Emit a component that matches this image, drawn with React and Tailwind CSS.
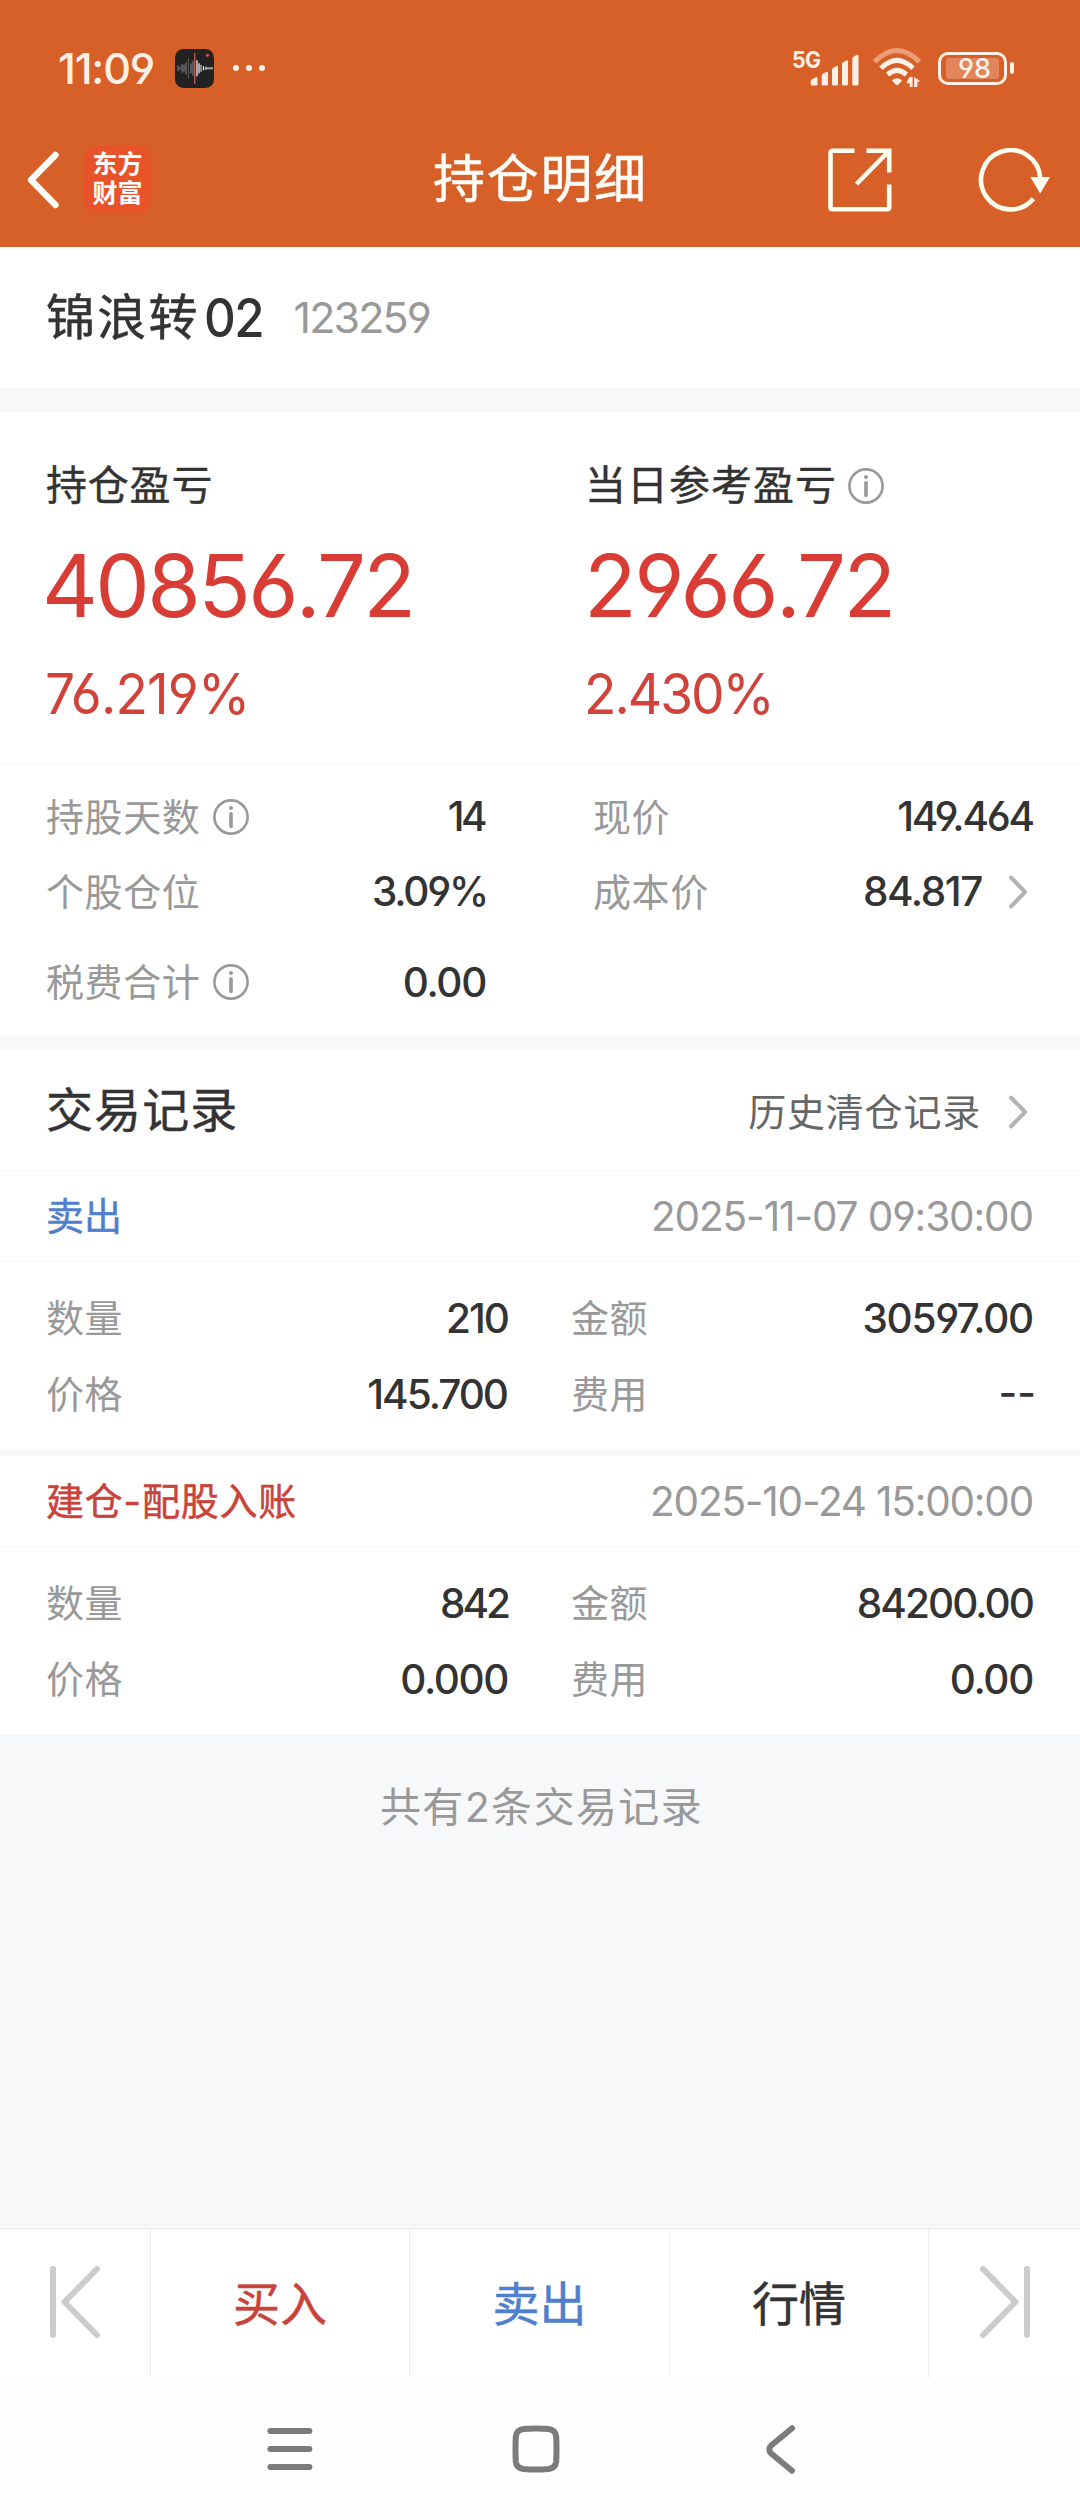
import React from "react";

const RED = "text-[#d93c34]";

function InfoIcon() {
  return (
    <svg className="shrink-0" width="36" height="36" viewBox="0 0 36 36" fill="none">
      <circle cx="18" cy="18" r="16.6" stroke="#999" strokeWidth="2.6" />
      <circle cx="18" cy="9" r="2" fill="#999" />
      <path d="M18 14.8V27.5" stroke="#999" strokeWidth="3.6" strokeLinecap="round" />
    </svg>
  );
}

function Chevron() {
  return (
    <svg className="shrink-0" width="20" height="34" viewBox="0 0 20 34" fill="none">
      <path d="M3 2.5L17 17L3 31.5" stroke="#b3b3b3" strokeWidth="4" strokeLinecap="round" strokeLinejoin="round" />
    </svg>
  );
}

function VoiceAppIcon() {
  const bars = [
    [3, 6, "#777"], [5, 3, "#777"], [7, 9, "#777"], [9, 7, "#777"], [11, 12, "#777"], [13.5, 20, "#555"],
    [16, 10, "#777"], [18, 15, "#777"], [22, 16, "#fff"], [24, 10, "#fff"], [26, 7, "#ccc"], [28.5, 4, "#fff"],
    [31, 3, "#fff"], [33, 2, "#fff"], [35, 2, "#fff"], [37, 2, "#fff"],
  ];
  return (
    <svg width="39" height="39" viewBox="0 0 39 39">
      <rect width="39" height="39" rx="8.5" fill="#222" />
      {bars.map(([x, h, c]) => (
        <rect key={x} x={x - 0.6} y={19.3 - h / 2} width="1.2" height={h} fill={c} />
      ))}
      <path d="M19.8 4V35" stroke="#e2604c" strokeWidth="1.2" />
      <circle cx="32.5" cy="6.3" r="1.6" fill="#d8503e" />
    </svg>
  );
}

function SignalIcon() {
  return (
    <svg width="50" height="40" viewBox="810 46 50 40" fill="#fff0e6">
      <path d="M810.7 79.5Q810.7 78 812 77.2L816 75.2Q817.5 74.8 817.5 76.2V82Q817.5 83.5 816 83.5H812.2Q810.7 83.5 810.7 82Z" />
      <path d="M821.7 74Q821.7 72.5 823 71.7L826.5 69.8Q828 69.4 828 70.8V82Q828 83.5 826.5 83.5H823.2Q821.7 83.5 821.7 82Z" />
      <path d="M832 68Q832 66.5 833.3 65.7L836.5 63.9Q838 63.5 838 64.9V82Q838 83.5 836.5 83.5H833.5Q832 83.5 832 82Z" />
      <path d="M842 62.5Q842 61 843.3 60.2L846.5 58.4Q848 58 848 59.4V82Q848 83.5 846.5 83.5H843.5Q842 83.5 842 82Z" />
      <path d="M852.3 57Q852.3 55.5 853.5 54.7L857 52.8Q858.5 52.4 858.5 53.8V82Q858.5 83.5 857 83.5H853.8Q852.3 83.5 852.3 82Z" />
    </svg>
  );
}

function WifiIcon() {
  return (
    <svg width="50" height="40" viewBox="0 0 50 40" fill="none">
      <path d="M2.6 13.8Q25 -8.8 47.4 13.8" stroke="#ec9e78" strokeWidth="5" />
      <path d="M9 20.2Q25 4.6 41 20.2" stroke="#fff0e6" strokeWidth="5" />
      <path d="M15.6 26.6Q25 18 34.4 26.6" stroke="#fff0e6" strokeWidth="5" />
      <path d="M19.8 32.5Q25 28 30.2 32.5L26.4 36.4Q25 37.6 23.6 36.4Z" fill="#fff0e6" />
      <path d="M37.4 29H40.6V39H37.8V35.2H34.4ZM42.2 29L48.6 33.6H45.4V39H42.2Z" fill="#fff0e6" />
    </svg>
  );
}

function Battery() {
  return (
    <div className="flex items-center gap-[3px]">
      <div className="flex h-[33px] w-[69px] items-center justify-center rounded-[10px] border-[3.5px] border-[#fff0e6]">
        <div className="flex h-[21px] w-[53px] items-center justify-center rounded-[3px] bg-[#e2855b] pl-[4px] text-[27px] font-medium leading-none text-[#fff0e6]">
          98
        </div>
      </div>
      <div className="h-[12px] w-[4px] rounded-full bg-[#fff0e6]" />
    </div>
  );
}

function StatusBar() {
  return (
    <div className="flex h-[136px] items-center pl-[58px] pr-[66px]">
      <span className="w-[117px] text-[43px] font-medium leading-none tracking-[-1.2px] text-[#fff0e6]">11:09</span>
      <VoiceAppIcon />
      <div className="ml-[19px] flex gap-[7px]">
        <i className="size-[6px] rounded-full bg-[#fff0e6]" />
        <i className="size-[6px] rounded-full bg-[#fff0e6]" />
        <i className="size-[6px] rounded-full bg-[#fff0e6]" />
      </div>
      <div className="relative ml-auto flex">
        <span className="absolute -left-[18px] top-px origin-left scale-x-[0.93] text-[23px] font-bold leading-none tracking-[-0.6px] text-[#fff0e6]">5G</span>
        <SignalIcon />
      </div>
      <div className="ml-[12px] mr-[16px] flex">
        <WifiIcon />
      </div>
      <Battery />
    </div>
  );
}

function NavBar() {
  return (
    <div className="flex h-[87px] items-center pl-[26px] pr-[28px]">
      <svg width="34" height="58" viewBox="0 0 34 58" fill="none">
        <path d="M29.5 4L5 29L29.5 54" stroke="#fffdf8" strokeWidth="6.4" strokeLinecap="round" strokeLinejoin="round" />
      </svg>
      <div className="ml-[24px] flex h-[67px] w-[67px] flex-col items-center justify-center rounded-[14px] bg-[#e9532a] pb-[2px] text-[25px] font-bold leading-[29px] text-white">
        <span>东方</span>
        <span>财富</span>
      </div>
      <h1 className="ml-[282px] text-[52px] leading-none tracking-[1.7px] text-[#fffdf8] [-webkit-text-stroke:0.5px]">持仓明细</h1>
      <svg className="ml-auto" width="64" height="64" viewBox="0 0 64 64" fill="none" stroke="#fffdf0" strokeWidth="4.6">
        <path d="M26.5 2.8H4.8Q2.5 2.8 2.5 5.1V58.9Q2.5 61.2 4.8 61.2H58.9Q61.2 61.2 61.2 58.9V36.5" />
        <path d="M38.5 2.8H61.2V24.5M61 3L28.5 36" />
      </svg>
      <svg className="ml-[86px]" width="74" height="64" viewBox="0 0 74 64" fill="none">
        <path d="M55.4 50.7A29.6 29.6 0 1 1 62.2 30" stroke="#fffdf0" strokeWidth="4.6" />
        <path d="M52.3 29H72L62.2 45.5Z" fill="#fffdf0" />
      </svg>
    </div>
  );
}

function Figure({ label, info, value, percent, labelClass, valueClass, percentClass }) {
  return (
    <div>
      <div className="flex h-[42px] items-center gap-[11px]">
        <span className={"text-[41px] leading-none text-[#333] [-webkit-text-stroke:0.4px] " + labelClass}>{label}</span>
        {info && <span className="flex pt-px"><InfoIcon /></span>}
      </div>
      <div className={"mt-[37px] h-[86px] text-[86.5px] leading-[86px] tracking-[-2.6px] " + RED + " " + valueClass}>{value}</div>
      <div className={"mt-[37px] h-[55px] origin-left scale-x-95 text-[56px] leading-[56px] text-[#d0423a] " + percentClass}>{percent}</div>
    </div>
  );
}

function Stat({ label, info, value, valueClass = "", className = "", more }) {
  return (
    <div className={"flex items-center " + className}>
      <span className="text-[38px] leading-none tracking-[0.6px] text-[#999]">{label}</span>
      {info && <span className="ml-[13px] flex"><InfoIcon /></span>}
      <span className={"ml-auto pt-[2px] text-[40.5px] font-medium leading-none text-[#333] " + valueClass}>{value}</span>
      {more && <span className="ml-[26px] mr-[5px] flex"><Chevron /></span>}
    </div>
  );
}

function Trade({ title, titleClass, time, timeClass, rows }) {
  return (
    <section className="bg-white">
      <div className="flex h-[91px] items-center justify-between border-b border-[#f4f5f6] pl-[46px] pr-[47px]">
        <span className={"text-[38px] leading-none [-webkit-text-stroke:0.5px] " + titleClass}>{title}</span>
        <span className={"pt-[2px] text-[40.5px] leading-none text-[#999] " + timeClass}>{time}</span>
      </div>
      <div className="py-[18px] pl-[46px] pr-[47px]">
        {rows.map(([l, v, lc, l2, v2, rc]) => (
          <div key={l} className="flex h-[76px]">
            <Stat label={l} value={v} valueClass={lc} className="w-[462px]" />
            <Stat label={l2} value={v2} valueClass={rc} className="ml-[63px] flex-1" />
          </div>
        ))}
      </div>
    </section>
  );
}

function BottomBar() {
  return (
    <div className="flex h-[150px] border-t border-[#e9eaec] bg-white text-[47px] leading-none">
      <div className="flex w-[151px] items-center border-r border-[#eee] pb-[4px] pl-[50px]">
        <svg width="51" height="74" viewBox="0 0 51 74" fill="none" stroke="#ccc" strokeWidth="6" strokeLinecap="round" strokeLinejoin="round">
          <path d="M3 4V70M47 4L14.5 37L47 70" />
        </svg>
      </div>
      <div className="flex w-[259px] items-center justify-center border-r border-[#eee] text-[#c9433b] [-webkit-text-stroke:0.5px]">买入</div>
      <div className="flex w-[260px] items-center justify-center border-r border-[#eee] text-[#4f7fce] [-webkit-text-stroke:0.5px]">卖出</div>
      <div className="flex w-[259px] items-center justify-center border-r border-[#eee] text-[#333] [-webkit-text-stroke:0.5px]">行情</div>
      <div className="flex flex-1 items-center justify-end pb-[4px] pr-[50px]">
        <svg width="51" height="74" viewBox="0 0 51 74" fill="none" stroke="#ccc" strokeWidth="6" strokeLinecap="round" strokeLinejoin="round">
          <path d="M48 4V70M4 4L36.5 37L4 70" />
        </svg>
      </div>
    </div>
  );
}

function SystemNav() {
  return (
    <div className="flex h-[142px] items-center bg-[#fefefe] pl-[267px]">
      <svg width="46" height="42" viewBox="0 0 46 42" stroke="#7b7b7b" strokeWidth="6" strokeLinecap="round">
        <path d="M3.4 3H42.4M3.4 21H42.4M3.4 39H42.4" />
      </svg>
      <svg className="ml-[199px]" width="48" height="48" viewBox="0 0 48 48" fill="none" stroke="#7b7b7b" strokeWidth="6">
        <path d="M24 3.4Q33 3.4 36.5 4Q43.6 5 44.2 11.5Q44.8 24 44.2 36.5Q43.6 43 36.5 44Q24 45.2 11.5 44Q4.4 43 3.8 36.5Q3.2 24 3.8 11.5Q4.4 5 11.5 4Q15 3.4 24 3.4Z" />
      </svg>
      <svg className="ml-[205px]" width="31" height="49" viewBox="0 0 31 49" fill="none" stroke="#7b7b7b" strokeWidth="6" strokeLinecap="round" strokeLinejoin="round">
        <path d="M27 3.3L6.5 20.2Q2 24.5 6.5 28.8L27 45.7" />
      </svg>
    </div>
  );
}

export default function App() {
  return (
    <div className="flex h-[2520px] w-[1080px] flex-col overflow-hidden whitespace-nowrap bg-[#f7f8fa] font-['Inter','Noto_Sans_CJK_SC',sans-serif] [font-feature-settings:'cv03','cv04']">
      <header className="h-[247px] shrink-0 bg-[#d75f28]">
        <StatusBar />
        <NavBar />
      </header>

      <div className="flex h-[141px] shrink-0 items-center bg-white pl-[46px] leading-none">
        <span className="text-[49px] tracking-[2.2px] text-[#333] [-webkit-text-stroke:0.5px]">锦浪转</span>
        <span className="ml-[4px] w-[90px] origin-left scale-x-[0.93] pt-[2px] text-[53px] font-medium tracking-[-1.6px] text-[#333]">02</span>
        <span className="text-[43px] tracking-[-1.9px] text-[#999]">123259</span>
      </div>

      <section className="mt-[24px] bg-white">
        <div className="flex h-[353px] border-b border-[#f5f6f7] pl-[46px] pt-[52px]">
          <div className="w-[539px]">
            <Figure
              label="持仓盈亏"
              value="40856.72"
              percent="76.219%"
              labelClass="tracking-[0.8px]"
              valueClass="-ml-[4px]"
              percentClass="tracking-[-0.9px] -ml-[1px]"
            />
          </div>
          <Figure
            label="当日参考盈亏"
            info
            value="2966.72"
            percent="2.430%"
            labelClass="tracking-[1px]"
            valueClass="-ml-[1px]"
            percentClass="tracking-[-2.1px] -ml-[1px]"
          />
        </div>
        <div className="pl-[46px] pr-[47px] pt-[14px]">
          <div className="flex h-[75px]">
            <Stat label="持股天数" info value="14" valueClass="tracking-[-3.6px] mr-[2px]" className="w-[440px]" />
            <Stat label="现价" value="149.464" valueClass="tracking-[-2.2px]" className="ml-[107px] flex-1" />
          </div>
          <div className="flex h-[75px]">
            <Stat label="个股仓位" value="3.09%" valueClass="tracking-[-2.2px] -mr-[1px]" className="w-[440px]" />
            <Stat label="成本价" value="84.817" valueClass="tracking-[-1.4px]" className="ml-[107px] flex-1" more />
          </div>
          <div className="flex h-[106px]">
            <Stat label="税费合计" info value="0.00" valueClass="tracking-[-1.3px]" className="w-[440px]" />
          </div>
        </div>
      </section>

      <div className="mt-[15px] flex h-[121px] shrink-0 items-center border-b border-[#f4f5f6] bg-white pl-[46px] pr-[52px] leading-none">
        <h2 className="pb-[2px] text-[47px] tracking-[1.1px] text-[#333] [-webkit-text-stroke:0.4px]">交易记录</h2>
        <div className="ml-auto flex items-center gap-[27px] pt-[3px]">
          <span className="text-[38px] tracking-[0.8px] text-[#666]">历史清仓记录</span>
          <Chevron />
        </div>
      </div>

      <Trade
        title="卖出"
        titleClass="text-[#4f7fce]"
        time="2025-11-07 09:30:00"
        timeClass="tracking-[-1.1px]"
        rows={[
          ["数量", "210", "tracking-[-2px]", "金额", "30597.00", "tracking-[-1.25px]"],
          ["价格", "145.700", "tracking-[-2px] mr-[1px]", "费用", "--", "-mr-[3px] -translate-y-[2px]"],
        ]}
      />
      <div className="h-[6px] shrink-0" />
      <Trade
        title="建仓-配股入账"
        titleClass="text-[#c9433b] tracking-[0.8px]"
        time="2025-10-24 15:00:00"
        timeClass="tracking-[-1.2px]"
        rows={[
          ["数量", "842", "tracking-[-3px]", "金额", "84200.00", "tracking-[-1.94px]"],
          ["价格", "0.000", "tracking-[-1.4px]", "费用", "0.00", "tracking-[-1.3px]"],
        ]}
      />

      <div className="flex h-[145px] shrink-0 items-center justify-center pl-[3px] text-[41px] leading-none tracking-[1.4px] text-[#999]">
        共有2条交易记录
      </div>

      <footer className="mt-auto">
        <BottomBar />
        <SystemNav />
      </footer>
    </div>
  );
}
